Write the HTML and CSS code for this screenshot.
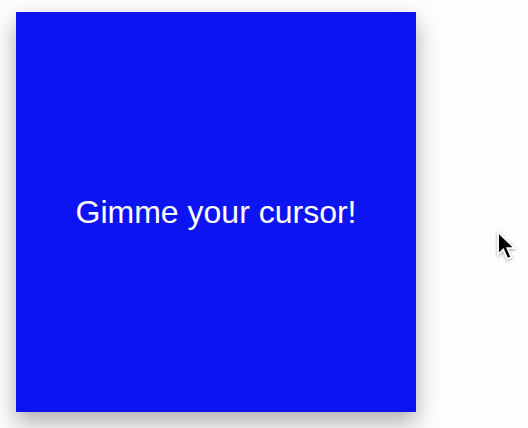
FILE: index.html
```html
<!DOCTYPE html>
<html>
<head>
<meta charset="utf-8">
<link rel="stylesheet" href="styles.css">
</head>
<body>
<div class="box">Gimme your cursor!</div>
<svg class="cursor" width="26" height="34" viewBox="0 0 19 25">
  <path d="M1.5 1.5 L1.5 18 L5.3 14.4 L8.3 21.2 L11.2 20 L8.3 13.3 L13.6 13.3 Z" fill="#000" stroke="#fff" stroke-width="1.3" stroke-linejoin="miter"/>
</svg>
</body>
</html>
```
FILE: styles.css
```css
html, body {
  margin: 0;
  padding: 0;
  background: #fdfdfd;
  width: 528px;
  height: 428px;
  overflow: hidden;
}
.box {
  margin: 12px 0 0 16px;
  width: 400px;
  height: 400px;
  background: #0d14f2;
  color: #fff;
  font-family: "Liberation Sans", Arial, sans-serif;
  font-size: 32px;
  display: flex;
  align-items: center;
  justify-content: center;
  box-shadow: 0 10px 22px rgba(0, 0, 0, 0.32);
}
.cursor {
  position: absolute;
  left: 496px;
  top: 230px;
  filter: drop-shadow(0 1px 1.5px rgba(0, 0, 0, 0.35));
}
```
